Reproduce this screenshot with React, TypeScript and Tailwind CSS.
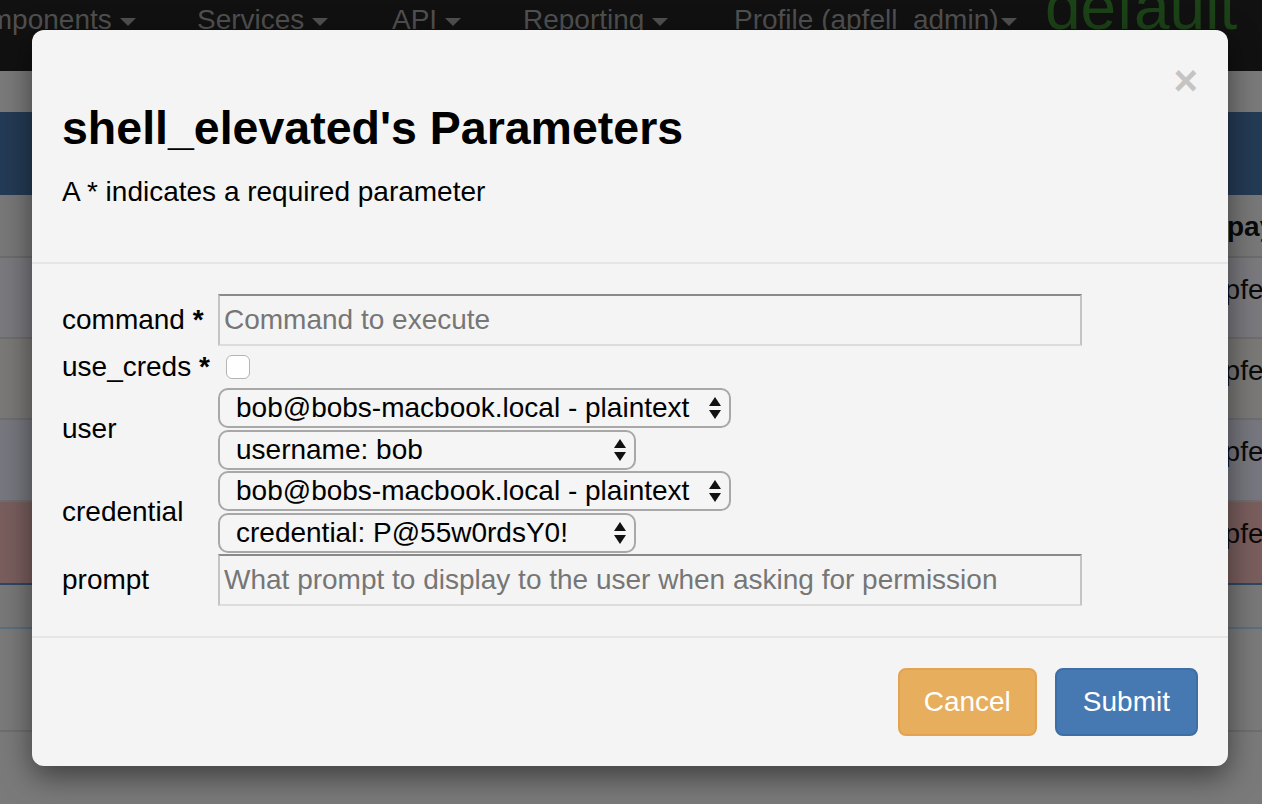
import React from 'react';

// Parameters modal over a dimmed dashboard page

const navItems = [
  { label: 'Components', w: 'w-[244px]', caretGap: true },
  { label: 'Services', w: 'w-[195px]', caretGap: true },
  { label: 'API', w: 'w-[131px]', caretGap: true },
  { label: 'Reporting', w: 'w-[211px]', caretGap: true },
  { label: 'Profile (apfell_admin)', w: 'w-[311px]', caretGap: false },
];

function Caret({ gap }: { gap: boolean }) {
  return (
    <span
      className={`inline-block h-0 w-0 border-x-[8px] border-t-[8px] border-x-transparent border-t-[#505050] align-middle ${
        gap ? 'ml-[8px]' : 'ml-[2px]'
      }`}
    />
  );
}

function Navbar() {
  return (
    <div className="flex h-[71px] items-start overflow-hidden bg-[#111111] text-[28px] leading-[40px] text-[#505050]">
      <div className="flex shrink-0 -ml-[47px]">
        {navItems.map((item) => (
          <div key={item.label} className={`shrink-0 whitespace-nowrap ${item.w}`}>
            {item.label}
            <Caret gap={item.caretGap} />
          </div>
        ))}
      </div>
      <div className="-mt-[25px] shrink-0 text-[64px] leading-[64px] text-[#1c4217]">default</div>
    </div>
  );
}

function BackgroundTable() {
  return (
    <div className="text-[28px] leading-[40px] text-[#0a0a0a]">
      <div className="h-[63px] border-b-2 border-[#6c6c6c] bg-[#787878] pl-[1227px] pt-[12px] font-bold whitespace-nowrap">
        payload
      </div>
      <div className="h-[81px] border-b-2 border-[#6e6e6e] bg-[#7a797e] pl-[1209px] pt-[12px]">apfell</div>
      <div className="h-[81px] border-b-2 border-[#6e6e6e] bg-[#7a7977] pl-[1209px] pt-[12px]">apfell</div>
      <div className="h-[82px] border-b-2 border-[#6e6e6e] bg-[#77777f] pl-[1209px] pt-[12px]">apfell</div>
      <div className="h-[83px] border-b-2 border-[#2c4766] bg-[#7a5e5e] pl-[1209px] pt-[12px]">apfell</div>
      <div className="h-[44px] border-b-2 border-[#5a6f7f] bg-[#787878]" />
      <div className="h-[103px] border-b-2 border-[#6e6e6e]" />
    </div>
  );
}

function FieldLabel({ name, required }: { name: string; required?: boolean }) {
  return (
    <div className="w-[156px] shrink-0 text-[28px] leading-[40px] whitespace-nowrap">
      {name}
      {required && <span className="font-bold"> *</span>}
    </div>
  );
}

function SelectArrows() {
  return (
    <svg width="12" height="23" viewBox="0 0 12 23" className="shrink-0">
      <polygon points="0,9 6,0 12,9" fill="#111" />
      <polygon points="0,13 12,13 6,22" fill="#111" />
    </svg>
  );
}

function FakeSelect({ value, width }: { value: string; width: string }) {
  return (
    <div
      className={`flex h-[40px] items-center justify-between rounded-[10px] border-2 border-[#a8a8a8] bg-[#f5f5f5] pl-[16px] pr-[8px] text-[28px] leading-[36px] text-black ${width}`}
    >
      <span className="whitespace-nowrap">{value}</span>
      <SelectArrows />
    </div>
  );
}

function TextField({ placeholder }: { placeholder: string }) {
  return (
    <input
      type="text"
      placeholder={placeholder}
      className="h-[52px] w-[864px] border-2 border-x-[#c4c4c4] border-t-[#8a8a8a] border-b-[#dcdcdc] bg-[#f4f4f4] pl-[4px] text-[28px] outline-none placeholder:text-[#767676]"
    />
  );
}

function ParamsModal() {
  return (
    <div className="absolute left-[32px] top-[30px] w-[1196px] rounded-[12px] bg-[#f4f4f4] text-black shadow-[0_10px_30px_rgba(0,0,0,0.5)]">
      {/* header */}
      <div className="flex items-start justify-between border-b-2 border-[#e5e5e5] p-[30px]">
        <div className="mt-[42px]">
          <h2 className="text-[46.5px] font-bold leading-[52px]">shell_elevated's Parameters</h2>
          <p className="mt-[18px] mb-[20px] text-[28px] leading-[40px]">A * indicates a required parameter</p>
        </div>
        <button className="text-[42px] font-bold leading-none text-[#c4c4c4]">×</button>
      </div>

      {/* body */}
      <div className="flex flex-col border-b-2 border-[#e5e5e5] px-[30px] pt-[30px] pb-[30px]">
        <div className="flex h-[52px] items-center">
          <FieldLabel name="command" required />
          <TextField placeholder="Command to execute" />
        </div>
        <div className="flex h-[42px] items-center">
          <FieldLabel name="use_creds" required />
          <input
            type="checkbox"
            className="ml-[8px] h-[24px] w-[24px] appearance-none rounded-[6px] border-[1.5px] border-[#b4b4b4] bg-white"
          />
        </div>
        <div className="flex items-center">
          <FieldLabel name="user" />
          <div className="flex flex-col gap-[2px]">
            <FakeSelect value="bob@bobs-macbook.local - plaintext" width="w-[513px]" />
            <FakeSelect value="username: bob" width="w-[418px]" />
          </div>
        </div>
        <div className="mt-[1px] flex items-center">
          <FieldLabel name="credential" />
          <div className="flex flex-col gap-[2px]">
            <FakeSelect value="bob@bobs-macbook.local - plaintext" width="w-[513px]" />
            <FakeSelect value="credential: P@55w0rdsY0!" width="w-[418px]" />
          </div>
        </div>
        <div className="mt-[1px] flex h-[52px] items-center">
          <FieldLabel name="prompt" />
          <TextField placeholder="What prompt to display to the user when asking for permission" />
        </div>
      </div>

      {/* footer */}
      <div className="flex justify-end gap-[18px] p-[30px]">
        <button className="h-[68px] rounded-[8px] border-2 border-[#e2a452] bg-[#e7ae5d] px-[24px] text-[28px] leading-[40px] text-white">
          Cancel
        </button>
        <button className="h-[68px] rounded-[8px] border-2 border-[#3d6ea6] bg-[#4679b2] px-[26px] text-[28px] leading-[40px] text-white">
          Submit
        </button>
      </div>
    </div>
  );
}

export default function App() {
  return (
    <div className="relative h-[804px] w-[1262px] overflow-hidden bg-[#7a7a7a] font-['Liberation_Sans',Arial,Helvetica,sans-serif]">
      <Navbar />
      <div className="h-[41px]" />
      <div className="h-[83px] bg-[#243b55]" />
      <BackgroundTable />
      <ParamsModal />
    </div>
  );
}
